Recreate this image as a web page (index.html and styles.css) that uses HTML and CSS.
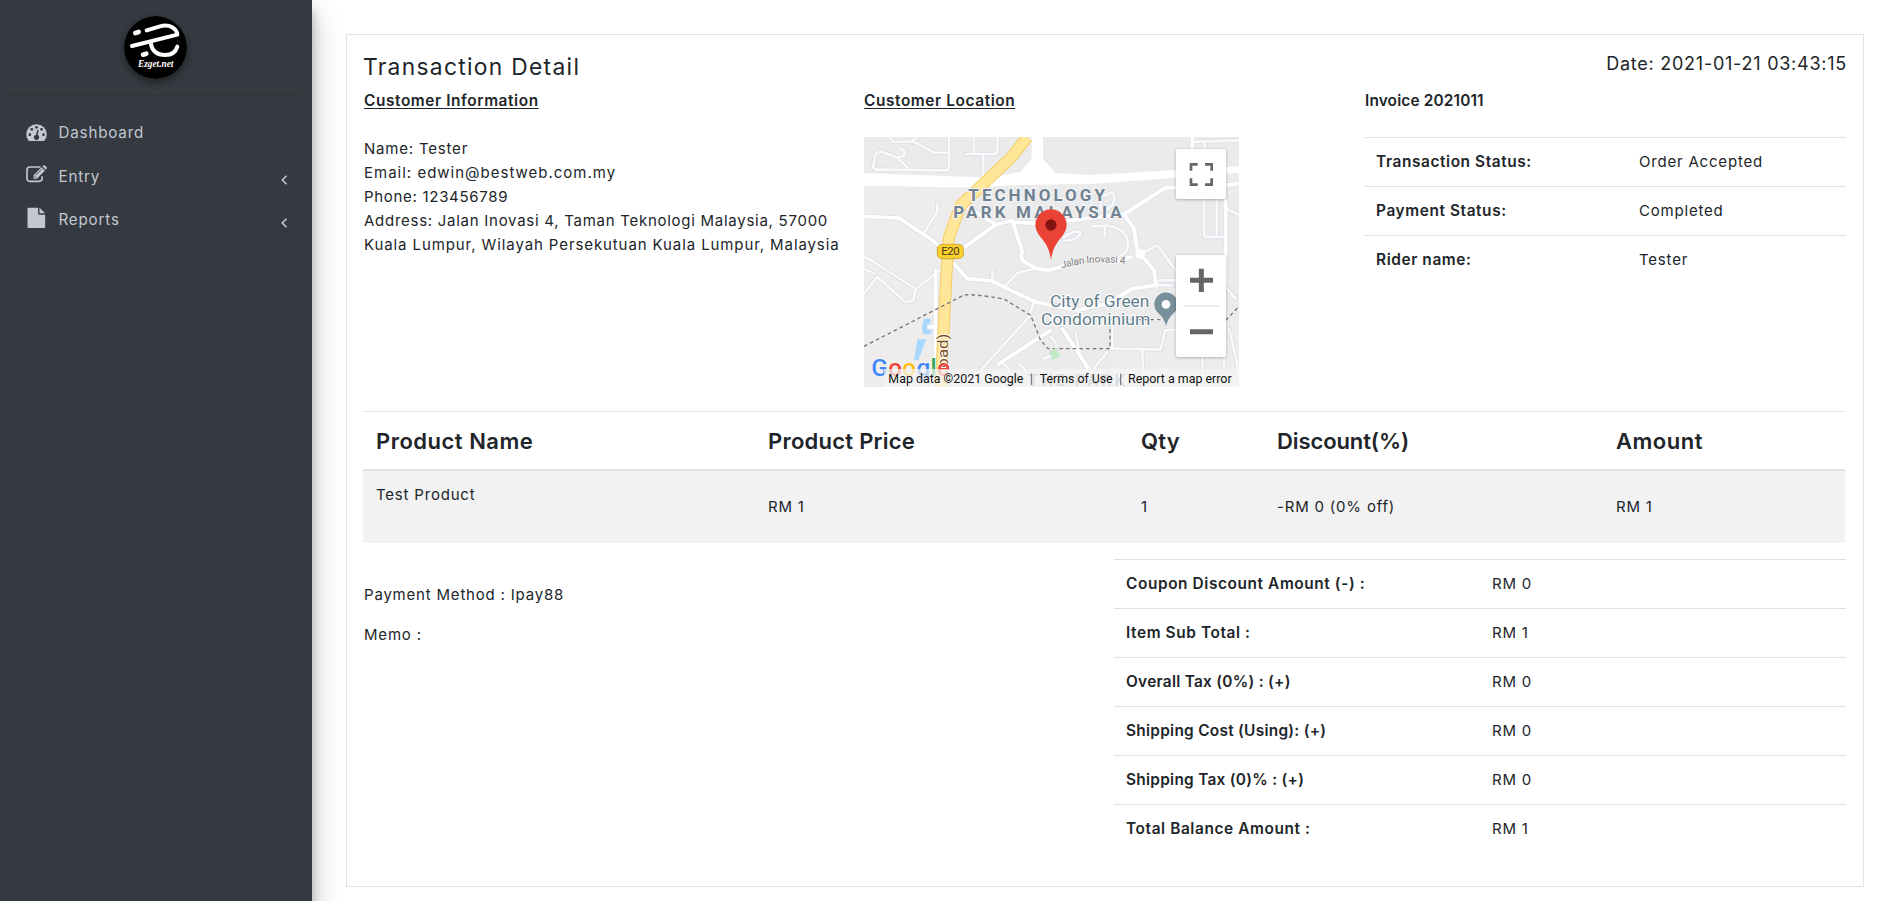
FILE: index.html
```html
<!DOCTYPE html>
<html lang="en">
<head>
<meta charset="utf-8">
<title>Transaction Detail</title>
<link rel="stylesheet" href="styles.css">
</head>
<body>
<div class="layout">
  <aside class="sidebar">
    <div class="brand">
      <svg class="brand-logo" viewBox="0 0 189 189">
        <circle cx="94.500" cy="94.500" r="94.500" fill="#000"/>
        <g fill="none" stroke="#fff" stroke-width="12" stroke-linecap="round" stroke-linejoin="round">
          <path d="M34 51 L44 48" stroke-width="14"/>
          <path d="M68 43 L108 31 C138 23 158 38 160 56 L24 90"/>
          <path d="M57 116 L67 113" stroke-width="14"/>
          <path d="M80 78 C83 108 100 117 124 117 C146 117 156 105 160 92"/>
        </g>
        <text class="brand-name" x="42" y="153" textLength="106" lengthAdjust="spacingAndGlyphs">Ezget.net</text>
      </svg>
    </div>
    <nav class="nav">
      <a class="nav-link">
        <svg class="nav-icon" viewBox="0 0 62 60"><path fill="currentColor" d="M8 54 Q0 44 0 33 A31 29 0 0 1 62 33 Q62 44 54 54 Z"/><g fill="#343a40"><circle cx="31" cy="13" r="4"/><circle cx="17" cy="19" r="4"/><circle cx="11" cy="35" r="4"/><circle cx="46" cy="19" r="4"/><circle cx="52" cy="35" r="4"/><path d="M33 20 L37 21 L35 36 A8 8 0 1 1 30 35 Z"/></g></svg>
        <span>Dashboard</span>
      </a>
      <a class="nav-link">
        <svg class="nav-icon nav-icon-edit" viewBox="0 0 62 60"><path fill="none" stroke="currentColor" stroke-width="5" d="M43 6 H11 Q2.500 6 2.500 15 V40 Q2.500 49 11 49 H39 Q48 49 48 40 V34"/><path fill="currentColor" d="M22 31 L46 7 L56 17 L32 41 H22 Z M49 4 L52 1 Q54 0 57 2 L61 6 Q63 9 61 11 L58 14 Z"/><path stroke="#343a40" stroke-width="2.500" fill="none" d="M28 31 L46 13 M25 34 L30 38"/></svg>
        <span>Entry</span>
        <svg class="nav-arrow" viewBox="0 0 10 14"><path d="M7.500 2.800 L3.300 7 L7.500 11.200"/></svg>
      </a>
      <a class="nav-link">
        <svg class="nav-icon nav-icon-file" viewBox="0 0 62 60"><path fill="currentColor" d="M6 -1 H36 V17 Q36 20 39 20 H57 V57 Q57 60 54 60 H7 Q4 60 4 57 V1 Q4 -1 6 -1 Z M40 -1 L57 16 H40 Z"/></svg>
        <span>Reports</span>
        <svg class="nav-arrow" viewBox="0 0 10 14"><path d="M7.500 2.800 L3.300 7 L7.500 11.200"/></svg>
      </a>
    </nav>
  </aside>

  <main class="content">
    <section class="card">
      <header class="card-head">
        <h1 class="title">Transaction Detail</h1>
        <div class="date">Date: 2021-01-21 03:43:15</div>
      </header>

      <div class="info">
        <div class="info-col">
          <div class="heading underlined"><span>Customer Information</span></div>
          <div class="customer">
            <div>Name: Tester</div>
            <div class="email">Email: edwin@bestweb.com.my</div>
            <div class="phone">Phone: 123456789</div>
            <div class="street">Address: Jalan Inovasi 4, Taman Teknologi Malaysia, 57000</div>
            <div class="region">Kuala Lumpur, Wilayah Persekutuan Kuala Lumpur, Malaysia</div>
          </div>
        </div>

        <div class="info-col">
          <div class="heading underlined"><span>Customer Location</span></div>
          <svg class="map" viewBox="0 0 1125 750">
            <rect width="1125" height="750" fill="#ebebeb"/>
            <path d="M0 150 L330 155 L250 280 L240 400 L230 750 H0 Z" fill="#eeedec"/>
            <path d="M740 640 L890 640 L900 580 L1125 540 V750 H740 Z" fill="#eeedeb"/>
            <defs>
              <g id="roads">
                <path d="M75 0 L90 15 L138 14 L160 0 M145 12 L208 46 L255 48 M255 0 V90 Q255 100 245 100 L40 98 Q26 98 28 84 L34 56 Q38 42 54 44 L100 62 L132 92 M100 62 L120 56 L122 42 L108 34"/>
                <path d="M330 0 V50 M306 51 H390 Q400 50 400 40 V0 M358 51 V125"/>
                <path d="M0 360 L25 372 L155 456 L148 490 L125 496 L40 420 L0 470 M0 395 L30 410 M40 420 L10 455 M155 456 L235 395"/>
                <path d="M220 200 V225 L178 290 M385 400 V432 M425 445 L460 408 L515 394"/>
                <path d="M510 495 L495 540 L350 700 L310 750 M420 680 L450 715 M465 680 L490 705 M560 600 L578 620 L575 650 L540 665"/>
                <path d="M635 590 L650 660 L670 695 M685 700 L730 645 M738 635 L890 638 L903 580 L980 575 M835 640 L838 750 M745 548 H895 M745 548 V635"/>
                <path d="M685 268 L730 266 Q790 275 792 320 Q792 350 760 358 M722 268 V298 M600 312 Q640 310 650 290 Q645 280 630 284 L600 300 M710 180 L745 165 Q758 180 745 205 L720 225 M710 180 V220"/>
                <path d="M1020 190 V290 Q1020 300 1030 300 H1080 M1058 190 V295 M985 15 L1125 10 M1022 15 V45 M1080 210 L1125 235 M1085 450 L1115 485 M840 345 L880 325 L935 400 M1015 660 V718 H1080 V660 M1095 575 L1120 680 V720"/>
                <path d="M875 445 H925 M880 455 V430 H940"/>
              </g>
              <g id="mainroads">
                <path d="M0 238 L105 243 L205 310 L235 335"/>
                <path d="M295 335 L395 263 L445 250 L475 345 Q465 370 490 380 L515 394 L555 400 L600 386 M300 205 L395 263 M445 255 L530 260 L780 232 L905 152 L940 152 M1080 145 L1125 140"/>
                <path d="M780 232 L810 275 L820 340 L870 400 L875 440 M800 360 L745 378 M875 445 L805 455 L730 500 L640 520 L515 495 L430 455 L385 432 L310 425 L270 380"/>
                <path d="M1085 190 V440 M985 0 V35 M180 570 H220 M215 400 L215 640 L205 750 M405 680 L560 580 M595 575 L690 720"/>
              </g>
            </defs>
            <g fill="none" stroke-linejoin="round" stroke-linecap="round">
              <use href="#roads" stroke="#dcdfe5" stroke-width="13"/>
              <use href="#mainroads" stroke="#dfe1e6" stroke-width="16"/>
              <use href="#roads" stroke="#f8f9fb" stroke-width="8"/>
              <use href="#mainroads" stroke="#fff" stroke-width="11"/>
              <circle cx="829" cy="351" r="10" stroke="#fff" stroke-width="9"/>
            </g>
            <path d="M0 108 L180 115 L380 122 L470 104 L503 65 V0 H537 V65 L575 108 L680 114 L1125 88 V108 L690 140 L440 145 L330 152 L0 146 Z" fill="#fff"/>
            <path d="M490 0 L445 58 L290 205 L255 300 L248 400 L230 750" fill="none" stroke="#f5cc62" stroke-width="36"/>
            <path d="M490 0 L445 58 L290 205 L255 300 L248 400 L230 750" fill="none" stroke="#ffe699" stroke-width="30"/>
            <path d="M0 628 L300 474 Q330 470 420 486 L500 535 L530 610 L552 635 H738 V548 H905 M1085 550 L1125 508" fill="none" stroke="#777" stroke-width="4" stroke-dasharray="11 9"/>
            <path d="M180 545 L200 545 Q203 560 190 562 V578 L205 580 L200 592 H178 Q170 570 180 545 Z M160 607 L187 606 L163 670 L150 668 Z" fill="#a9d8ff"/>
            <path d="M555 645 L575 632 L590 657 L567 670 Z" fill="#c6e9c8"/>
            <path d="M228 323 Q258 320 290 323 L298 330 V357 L290 364 Q258 368 228 364 L220 357 V330 Z" fill="#fad02f" stroke="#b98d1b" stroke-width="2"/>
            <text class="map-shield" x="232" y="355" textLength="55">E20</text>
            <g class="map-area">
              <text x="313" y="192" textLength="410">TECHNOLOGY</text>
              <text x="268" y="244" textLength="505">PARK MALAYSIA</text>
              <text x="492" y="746" textLength="292" opacity=".6">THE PARK</text>
            </g>
            <path id="street" d="M593 394 Q690 366 790 382" fill="none"/>
            <text class="map-street"><textPath href="#street" textLength="192">Jalan Inovasi 4</textPath></text>
            <g class="map-place">
              <text x="558" y="511" textLength="298" lengthAdjust="spacingAndGlyphs">City of Green</text>
              <text x="531" y="563" textLength="328" lengthAdjust="spacingAndGlyphs">Condominium</text>
            </g>
            <path d="M906 568 Q902 545 882 527 A35 35 0 1 1 930 527 Q910 545 906 568 Z" fill="#78909c"/>
            <circle cx="906" cy="502" r="13" fill="#fff"/>
            <text class="map-road" transform="translate(253 692) rotate(-90)" x="0" y="0" textLength="102" lengthAdjust="spacingAndGlyphs">oad)</text>
            <path d="M561 370 Q557 330 530 301 Q514 281 514 264 A47 47 0 0 1 608 264 Q608 281 592 301 Q565 330 561 370 Z" fill="#ea4335"/>
            <circle cx="561" cy="264" r="17" fill="#811411"/>
            <text class="map-logo" x="22" y="716" textLength="236"><tspan fill="#4285f4">G</tspan><tspan fill="#ea4335">o</tspan><tspan fill="#fbbc05">o</tspan><tspan fill="#4285f4">g</tspan><tspan fill="#34a853">l</tspan><tspan fill="#ea4335">e</tspan></text>
            <rect x="60" y="696" width="1065" height="54" fill="#f5f5f5" opacity=".7"/>
            <g class="map-legal">
              <text x="73" y="738" textLength="405" lengthAdjust="spacingAndGlyphs">Map data ©2021 Google</text>
              <text x="527" y="738" textLength="219" lengthAdjust="spacingAndGlyphs">Terms of Use</text>
              <text x="792" y="738" textLength="311" lengthAdjust="spacingAndGlyphs">Report a map error</text>
            </g>
            <path d="M502 710 V744 M770 710 V744" stroke="#667" stroke-width="3"/>
            <g class="map-control">
              <rect x="936" y="36" width="150" height="150" rx="6"/>
              <rect x="936" y="354" width="150" height="306" rx="6"/>
            </g>
            <path d="M958 507 H1068" stroke="#e6e6e6" stroke-width="5"/>
            <path d="M981 101 V82 H1001 M1023 82 H1043 V101 M1043 124 V143 H1023 M1001 143 H981 V124" fill="none" stroke="#666" stroke-width="8"/>
            <path d="M978 430 H1047 M1012 395 V465 M978 584 H1047" stroke="#666" stroke-width="15"/>
          </svg>
        </div>

        <div class="info-col">
          <div class="heading invoice"><span>Invoice 2021011</span></div>
          <div class="pairs status">
            <div class="pair"><b>Transaction Status:</b><span>Order Accepted</span></div>
            <div class="pair"><b>Payment Status:</b><span>Completed</span></div>
            <div class="pair"><b>Rider name:</b><span>Tester</span></div>
          </div>
        </div>
      </div>

      <div class="products">
        <div class="product-row product-head"><div class="wide">Product Name</div><div>Product Price</div><div>Qty</div><div class="tight">Discount(%)</div><div class="wide">Amount</div></div>
        <div class="product-row product-item"><div class="product-name">Test Product</div><div>RM 1</div><div>1</div><div>-RM 0 (0% off)</div><div>RM 1</div></div>
      </div>

      <div class="footer">
        <div class="notes">
          <p>Payment Method : Ipay88</p>
          <p>Memo :</p>
        </div>
        <div class="pairs totals">
          <div class="pair"><b>Coupon Discount Amount (-) :</b><span>RM 0</span></div>
          <div class="pair"><b>Item Sub Total :</b><span>RM 1</span></div>
          <div class="pair"><b class="snug">Overall Tax (0%) : (+)</b><span>RM 0</span></div>
          <div class="pair"><b class="snug">Shipping Cost (Using): (+)</b><span>RM 0</span></div>
          <div class="pair"><b class="snug">Shipping Tax (0)% : (+)</b><span>RM 0</span></div>
          <div class="pair"><b>Total Balance Amount :</b><span>RM 1</span></div>
        </div>
      </div>
    </section>
  </main>
</div>
</body>
</html>
```

FILE: styles.css
```css
* { box-sizing: border-box; }

body {
  margin: 0;
  background: #fff;
  color: #212529;
  font: 400 15px/24px Inter, "Liberation Sans", sans-serif;
  letter-spacing: 0.8px;
}

.layout {
  display: flex;
  height: 901px;
  overflow: hidden;
}

.sidebar {
  flex: none;
  width: 312px;
  background: #343a40;
  box-shadow: 0 14px 28px rgba(0, 0, 0, .25), 0 10px 10px rgba(0, 0, 0, .22);
  color: #c2c7d0;
}

.brand {
  height: 96px;
  margin: 0 9px 0 7px;
  padding: 16px 0 0 117px;
  border-bottom: 1px solid #2f3438;
}

.brand-logo {
  display: block;
  width: 63px;
  height: 63px;
  border-radius: 50%;
  box-shadow: 0 3px 6px rgba(0, 0, 0, .2), 0 3px 6px rgba(0, 0, 0, .25);
}

.brand-name {
  fill: #fff;
  font: italic 700 28px "Liberation Serif", serif;
  letter-spacing: 0;
}

.nav {
  padding-top: 15px;
  font-size: 15.200px;
}

.nav-link {
  display: flex;
  align-items: center;
  height: 43.500px;
  padding: 0 23px 0 26px;
}

.nav-link span { padding-top: 1px; }

.nav-icon {
  width: 21px;
  height: 20px;
  margin-right: 11.500px;
  overflow: visible;
}

.nav-icon-edit { margin-bottom: 2px; }
.nav-icon-file { margin-bottom: 3px; }

.nav-arrow {
  width: 10px;
  height: 14px;
  margin: 7px 0 0 auto;
  fill: none;
  stroke: #c2c7d0;
  stroke-width: 1.600;
}

.content {
  flex: 1;
  padding: 34px 33px 0 34px;
}

.card {
  height: 853px;
  padding: 0 17px;
  border: 1px solid #dee2e6;
}

.card-head {
  display: flex;
  justify-content: space-between;
  height: 54px;
}

.title {
  margin: 18px 0 0 -1px;
  font-size: 22.800px;
  font-weight: 400;
  line-height: 28px;
  letter-spacing: 1.300px;
}

.date {
  margin: 17px -1px 0 0;
  font-size: 18px;
  line-height: 24px;
  letter-spacing: 0.750px;
}

.info {
  display: grid;
  grid-template-columns: 500px 500px 482px;
  height: 322px;
}

.heading {
  height: 48px;
  font-size: 15.400px;
  font-weight: 600;
  letter-spacing: 0.600px;
}

.invoice { padding-left: 1px; letter-spacing: 0.150px; }

.underlined span {
  text-decoration: underline;
  text-decoration-thickness: 1px;
  text-underline-offset: 1.500px;
}

.map {
  display: block;
  width: 375px;
  height: 250px;
}

.map text {
  font-family: Roboto, sans-serif;
  font-weight: 400;
  letter-spacing: 0;
}

.map .map-shield { font-size: 34px; fill: #4b3a12; }
.map .map-area text { font-size: 51px; font-weight: 700; fill: #6f8191; stroke: #f5f5f5; stroke-width: 6px; paint-order: stroke; }
.map .map-street { font-size: 30px; fill: #7d7d7d; stroke: #f5f5f5; stroke-width: 5px; paint-order: stroke; }
.map .map-place { font-size: 51px; fill: #607d8b; stroke: #fff; stroke-width: 6px; paint-order: stroke; }
.map .map-road { font-size: 46px; fill: #7a4b20; stroke: #fff; stroke-width: 5px; paint-order: stroke; }
.map .map-logo { font-size: 73px; font-weight: 500; stroke: #fff; stroke-width: 3px; paint-order: stroke; }
.map .map-legal { font-size: 39px; fill: #111; }
.map-control { fill: #fff; filter: drop-shadow(0 2px 4px rgba(0, 0, 0, .3)); }

.customer { white-space: nowrap; }
.email { letter-spacing: 1px; }
.phone { letter-spacing: 0.700px; }
.street { letter-spacing: 0.730px; }
.region { letter-spacing: 0.900px; }

.pair {
  display: grid;
  height: 49px;
  padding: 12px 12px 0;
  border-top: 1px solid #dee2e6;
}

.pair b {
  font-size: 15.400px;
  font-weight: 600;
  letter-spacing: 0.600px;
}

.pair .snug { letter-spacing: 0.280px; }

.status .pair { grid-template-columns: 263px 1fr; }
.totals .pair { grid-template-columns: 366px 1fr; }

.products {
  margin: 0 1px 0 -1px;
  border-top: 1px solid #dee2e6;
}

.product-row {
  display: grid;
  grid-template-columns: 392px 373px 136px 339px 1fr;
  padding-left: 13px;
}

.product-head {
  height: 59px;
  padding-top: 15px;
  border-bottom: 2px solid #dee2e6;
  font-size: 22px;
  font-weight: 600;
  line-height: 28px;
  letter-spacing: 0.250px;
}

.wide { letter-spacing: 0.500px; }
.tight { letter-spacing: -0.100px; }

.product-item {
  height: 72px;
  padding-top: 24px;
  background: #f2f2f2;
}

.product-name { margin-top: -12px; }

.footer {
  display: flex;
  justify-content: space-between;
  padding-top: 16px;
}

.notes { padding-top: 24px; }
.notes p { margin: 0 0 16px; }
.totals { width: 732px; }
```
